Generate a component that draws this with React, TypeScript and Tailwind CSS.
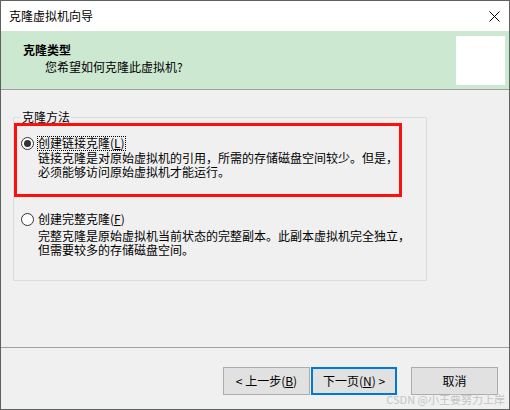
import React from "react";

const font = { fontFamily: '"Noto Sans CJK SC", "Noto Sans", sans-serif' };

function Radio({ checked }: { checked: boolean }) {
  return (
    <div className="mt-[1px] flex h-[13px] w-[13px] shrink-0 items-center justify-center rounded-full border border-[#333333] bg-white">
      {checked && <div className="h-[7px] w-[7px] rounded-full bg-[#333333]" />}
    </div>
  );
}

export default function App() {
  return (
    <div
      className="relative flex h-[410px] w-[510px] flex-col overflow-hidden border border-[#5e625f] bg-[#f0f0f0] text-[12px] text-black"
      style={font}
    >
      {/* Title bar */}
      <div className="flex h-[30px] shrink-0 items-center justify-between bg-white pl-[8px] pr-[9px]">
        <span className="leading-[14px]">克隆虚拟机向导</span>
        <svg width="11" height="11" viewBox="0 0 11 11" className="mt-[1px]">
          <path d="M0.5 0.5 L10.5 10.5 M10.5 0.5 L0.5 10.5" stroke="#000" strokeWidth="1" fill="none" />
        </svg>
      </div>

      {/* Header */}
      <div className="flex h-[59px] shrink-0 justify-between border-b border-[#a0a0a0] bg-[#cde8d0]">
        <div className="pl-[22px] pt-[11px]">
          <div className="font-bold leading-[16px]">克隆类型</div>
          <div className="mt-[1px] pl-[22px] leading-[16px]">您希望如何克隆此虚拟机?</div>
        </div>
        <div className="mr-[4px] mt-[5px] h-[49px] w-[49px] bg-white" />
      </div>

      {/* Body */}
      <div className="flex-1">
        <div className="relative ml-[12px] mt-[27px] h-[164px] w-[414px] border border-[#dcdcdc]">
          <span className="absolute left-[7px] top-[-9px] bg-[#f0f0f0] px-[1px] leading-[16px]">克隆方法</span>
          <div className="absolute left-0 top-[5px] h-[74px] w-[388px] border-[3px] border-[#ff0f0a]" />

          <div className="flex flex-col pl-[7px] pt-[18px]">
            <div className="flex">
              <Radio checked />
              <div className="ml-[3px] flex flex-col whitespace-nowrap">
                <span className="self-start border border-dotted border-black leading-[12px] pb-[1px]">
                  创建链接克隆(<span className="underline">L</span>)
                </span>
                <span className="pl-[1px] leading-[14px]">链接克隆是对原始虚拟机的引用，所需的存储磁盘空间较少。但是，</span>
                <span className="pl-[1px] leading-[14px]">必须能够访问原始虚拟机才能运行。</span>
              </div>
            </div>

            <div className="mt-[33px] flex">
              <Radio checked={false} />
              <div className="ml-[3px] flex flex-col whitespace-nowrap">
                <span className="self-start border border-transparent leading-[12px] pb-[1px]">
                  创建完整克隆(<span className="underline">F</span>)
                </span>
                <span className="mt-[2px] pl-[1px] leading-[14px]">完整克隆是原始虚拟机当前状态的完整副本。此副本虚拟机完全独立，</span>
                <span className="pl-[1px] leading-[14px]">但需要较多的存储磁盘空间。</span>
              </div>
            </div>
          </div>
        </div>
      </div>

      {/* Footer */}
      <div className="flex h-[62px] shrink-0 items-start justify-end border-t border-[#a0a0a0] pr-[11px] pt-[19px]">
        <button className="flex h-[28px] w-[87px] items-center justify-center border border-[#adadad] bg-[#e1e1e1] leading-[14px]">
          &lt; 上一步(<span className="underline">B</span>)
        </button>
        <button className="ml-[1px] flex h-[28px] w-[86px] items-center justify-center border-2 border-[#0078d7] bg-[#e1e1e1] leading-[14px]">
          下一页(<span className="underline">N</span>) &gt;
        </button>
        <button className="ml-[14px] flex h-[28px] w-[87px] items-center justify-center border border-[#adadad] bg-[#e1e1e1] leading-[14px]">
          取消
        </button>
      </div>

      <span className="absolute bottom-[3px] right-[4px] text-[11px] leading-[13px] text-[#c4c4c4]">
        CSDN @小王要努力上岸
      </span>
    </div>
  );
}
